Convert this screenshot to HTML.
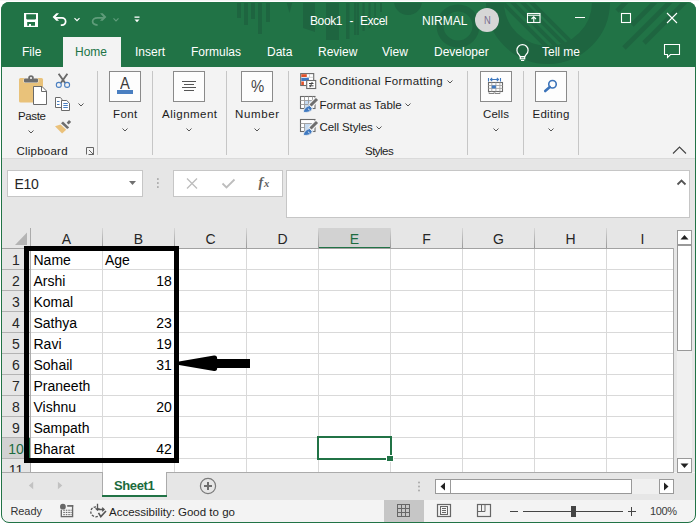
<!DOCTYPE html>
<html><head><meta charset="utf-8">
<style>
*{margin:0;padding:0;box-sizing:border-box}
html,body{width:699px;height:528px;overflow:hidden;background:#fff;font-family:"Liberation Sans",sans-serif;}
.a{position:absolute}
#win{position:absolute;left:0;top:0;width:699px;height:528px;clip-path:inset(2px 3px 5px 1px round 8px);background:#f3f3f3}
#bord{position:absolute;left:1px;top:2px;width:695px;height:521px;border:1px solid #217346;border-radius:8px;z-index:50}
.t{position:absolute;white-space:nowrap;line-height:1}
.w{color:#fff}
.tab{font-size:12px;color:#fff}
.rl{font-size:11.5px;color:#1c1c1c;letter-spacing:-0.1px}
.sep{position:absolute;width:1px;background:#c6c6c6}
.box{position:absolute;border:1px solid #8a8a8a;background:#fdfdfd}
.cell{position:absolute;font-size:14px;color:#000;line-height:1;white-space:nowrap}
.hdr{position:absolute;font-size:14px;color:#262626;line-height:1;white-space:nowrap}
</style></head><body>
<div id="win">

<div class="a" style="left:0;top:0;width:699px;height:67px;background:#217346"></div>
<svg class="a" style="left:0;top:0" width="699" height="67">
 <defs><clipPath id="bc"><circle cx="548" cy="2" r="44"/></clipPath></defs>
 <g fill="#1e6540">
  <rect x="237" y="0" width="4" height="18"/>
  <rect x="244" y="0" width="4" height="25"/>
  <rect x="251" y="0" width="4" height="19"/>
  <rect x="258" y="0" width="4" height="34"/>
  <rect x="266" y="0" width="4" height="22"/>
  <path d="M286 0h7l-3.5 13z"/>
  <path d="M303 0h12v32l-12-4z"/>
  <rect x="326" y="0" width="13" height="40"/>
  <rect x="346" y="0" width="3.5" height="39"/>
  <rect x="354" y="0" width="2.5" height="35"/>
  <rect x="357" y="0" width="2" height="35"/>
  <rect x="362.5" y="0" width="2.2" height="31"/>
  <rect x="368.5" y="0" width="2" height="28"/>
  <rect x="374.3" y="0" width="1.5" height="17"/>
  <rect x="380" y="0" width="2" height="12"/>
  <circle cx="408" cy="1" r="14"/>
 </g>
 <circle cx="458" cy="26" r="18" stroke-width="7" fill="none" stroke="#1e6540"/>
 <circle cx="548" cy="2" r="53" stroke-width="18" fill="none" stroke="#1e6540"/>
 <g stroke="#1e6540" stroke-width="4" clip-path="url(#bc)">
  <line x1="490" y1="-10" x2="580" y2="80"/>
  <line x1="500" y1="-10" x2="590" y2="80"/>
  <line x1="510" y1="-10" x2="600" y2="80"/>
  <line x1="519" y1="-10" x2="609" y2="80"/>
 </g>
 <g stroke="#1e6540" stroke-width="4.7">
  <line x1="617" y1="11" x2="632" y2="-4"/>
  <line x1="632" y1="25" x2="660" y2="-3"/>
  <line x1="624" y1="48" x2="674" y2="-2"/>
  <line x1="644" y1="43" x2="692" y2="-5"/>
 </g>
</svg>
<svg class="a" style="left:0;top:0" width="160" height="36">
 <path fill-rule="evenodd" fill="#fff" d="M24 13H38V27H24Z M26.2 14.3H36V18.7L35.2 19.6H27L26.2 18.7Z M27.2 22H35V25.7H31V24.1H29V25.7H27.2Z"/>
 <path d="M52.6 17L56.3 13.2H59L55.6 17L59 20.8H56.3Z" fill="#fff"/>
 <path d="M55.5 17.9H62A3.65 3.65 0 0 1 62 25.2H60.8" fill="none" stroke="#fff" stroke-width="1.75"/>
 <path d="M74.5 18.2l2.5 2.5 2.5-2.5" fill="none" stroke="#fff" stroke-width="1.2"/>
 <path d="M106.4 17L102.7 13.2H100L103.4 17L100 20.8H102.7Z" fill="#5f9c7a"/>
 <path d="M103.5 17.9H97.5C94.5 17.9 92.6 19.6 92.6 21.6C92.6 23.4 94.2 24.8 97.6 25.1" fill="none" stroke="#5f9c7a" stroke-width="1.75"/>
 <path d="M113.5 18.3l2.5 2.5 2.5-2.5" fill="none" stroke="#5f9c7a" stroke-width="1.2"/>
 <rect x="134.5" y="16.5" width="5" height="1.3" fill="#fff"/>
 <path d="M134.5 19.5h5l-2.5 2.8z" fill="#fff"/>
</svg>
<div class="t w" style="left:310px;top:15px;font-size:12px;letter-spacing:-0.4px">Book1</div>
<div class="t w" style="left:349.5px;top:15px;font-size:12px">-</div>
<div class="t w" style="left:360px;top:15px;font-size:12px;letter-spacing:-0.45px">Excel</div>
<div class="t w" style="left:422px;top:15px;font-size:12px">NIRMAL</div>
<div class="a" style="left:475px;top:8px;width:24px;height:24px;border-radius:50%;background:#d6d6d6"></div>
<div class="t" style="left:483.5px;top:14.6px;font-size:11px;color:#7a7090;transform:scaleX(0.85);transform-origin:0 0">N</div>
<svg class="a" style="left:500px;top:0" width="199" height="36">
 <g fill="none" stroke="#fff" stroke-width="1.1">
  <rect x="27.5" y="13.5" width="12.5" height="9"/>
  <path d="M27.5 15.3h12.5"/>
  <path d="M33.75 22.5v-5.5M31.5 19l2.25-2.25 2.25 2.25"/>
  <path d="M75 17.5h10"/>
  <rect x="121.5" y="13.5" width="9" height="9"/>
  <path d="M167 13l10 10M177 13l-10 10"/>
 </g>
</svg>
<div class="a" style="left:63px;top:37px;width:58px;height:30px;background:#f3f3f3"></div>
<div class="t tab" style="left:22px;top:46px">File</div>
<div class="t tab" style="left:75px;top:46px;color:#217346">Home</div>
<div class="t tab" style="left:135px;top:46px">Insert</div>
<div class="t tab" style="left:191px;top:46px">Formulas</div>
<div class="t tab" style="left:267px;top:46px">Data</div>
<div class="t tab" style="left:318px;top:46px">Review</div>
<div class="t tab" style="left:382px;top:46px">View</div>
<div class="t tab" style="left:434px;top:46px">Developer</div>
<svg class="a" style="left:500px;top:37.5px" width="40" height="30">
 <g fill="none" stroke="#fff" stroke-width="1.2">
  <path d="M20.3 18.6 L18.6 16.2 A5.6 5.6 0 1 1 26.4 16.2 L24.7 18.6 Z"/>
  <rect x="20.3" y="18.6" width="4.4" height="2.2"/>
 </g>
 <path d="M21 22.5h3.2" stroke="#fff" stroke-width="1.2"/>
</svg>
<div class="t tab" style="left:542px;top:46px">Tell me</div>
<svg class="a" style="left:660px;top:40px" width="24" height="22">
 <path d="M4.5 4.5h15v10h-9l-3 3v-3h-3z" fill="none" stroke="#fff" stroke-width="1.1"/>
</svg>


<div class="a" style="left:0;top:158px;width:699px;height:1px;background:#dadada"></div>
<div class="a" style="left:0;top:159px;width:699px;height:313px;background:#e6e6e6"></div>
<!-- clipboard -->
<svg class="a" style="left:0;top:66px" width="98" height="92">
 <rect x="19" y="12" width="24" height="24.5" rx="1.5" fill="#e9c27a"/>
 <rect x="23.6" y="12.2" width="14.8" height="4.6" rx="1.2" fill="#f6f6f6"/>
 <circle cx="31" cy="12" r="3.3" fill="#f6f6f6"/>
 <rect x="24" y="12.6" width="14" height="3.8" rx="1" fill="#6e6e6e"/>
 <circle cx="31" cy="12" r="2.8" fill="#6e6e6e"/>
 <circle cx="31" cy="12" r="1" fill="#fff"/>
 <path d="M33.5 20.5h8.5l4.5 4.5v13.5h-13z" fill="#fff" stroke="#6a6a6a" stroke-width="1"/>
 <path d="M41.5 20.5v5h5" fill="none" stroke="#6a6a6a" stroke-width="1"/>
 <!-- scissors -->
 <path d="M58.6 7.8l6.6 9.2M67.4 7.8l-6.6 9.2" stroke="#6a6a6a" stroke-width="1.9" fill="none"/>
 <circle cx="58.8" cy="18.9" r="2.5" fill="none" stroke="#4a7fc1" stroke-width="1.1"/>
 <circle cx="67.1" cy="18.9" r="2.5" fill="none" stroke="#4a7fc1" stroke-width="1.1"/>
 <!-- copy -->
 <path d="M55.5 31.5h4.7l1.8 1.8v8.2h-6.5z" fill="#fff" stroke="#6a6a6a" stroke-width="1"/>
 <path d="M61.5 34.5h5.2l2.8 2.8v7.2h-8z" fill="#fff" stroke="#6a6a6a" stroke-width="1"/>
 <path d="M57 35.5h2.5M57 38.5h2.5M63.3 37.5h4.5M63.3 39.5h4.5M63.3 41.5h4.5" stroke="#4a7fc1" stroke-width="1"/>
 <path d="M78.5 37.5l2.5 2.5 2.5-2.5" fill="none" stroke="#555" stroke-width="1"/>
 <!-- format painter -->
 <path d="M55 60.3L60.5 58.6L66.2 63.8L62.1 67.6Z" fill="#eac17a"/>
 <path d="M61 57.2L63 55.6L69.2 61.4L67.2 63Z" fill="#6e6e6e"/>
 <path d="M66.7 56.7L69 54L71.2 56L68.5 58.6Z" fill="#6e6e6e"/>
 <path d="M28.5 64.5l2.5 2.5 2.5-2.5" fill="none" stroke="#555" stroke-width="1"/>
 <path d="M86.5 88.5v-7h7v7h-5" fill="none" stroke="#666" stroke-width="1"/>
 <path d="M89 84l4 4M90 88.5h3.5v-3.5" fill="none" stroke="#666" stroke-width="1"/>
</svg>
<div class="t rl" style="left:18px;top:110.5px;letter-spacing:-0.35px">Paste</div>
<div class="t rl" style="left:16.5px;top:146px;letter-spacing:0.23px">Clipboard</div>
<div class="sep" style="left:97px;top:71px;height:84px"></div>
<!-- font -->
<div class="box" style="left:109px;top:71px;width:32px;height:31px"></div>
<div class="t" style="left:120.3px;top:76px;font-size:16px;color:#3a3a3a;transform:scaleX(0.92);transform-origin:0 0">A</div>
<div class="a" style="left:117px;top:90px;width:16px;height:4px;background:#4a7fc1"></div>
<div class="t rl" style="left:113px;top:109px;letter-spacing:0.4px">Font</div>
<svg class="a" style="left:100px;top:120px" width="60" height="20"><path d="M22.5 8.5l2.5 2.5 2.5-2.5" fill="none" stroke="#555" stroke-width="1"/></svg>
<div class="sep" style="left:152px;top:71px;height:84px"></div>
<!-- alignment -->
<div class="box" style="left:173px;top:71px;width:32px;height:31px"></div>
<svg class="a" style="left:173px;top:71px" width="32" height="31"><path d="M9 10.5h14M11 13.5h10M9 16.5h14M11 19.5h10" stroke="#555" stroke-width="1"/></svg>
<div class="t rl" style="left:162px;top:109px;letter-spacing:0.49px">Alignment</div>
<svg class="a" style="left:164px;top:120px" width="60" height="20"><path d="M22.5 8.5l2.5 2.5 2.5-2.5" fill="none" stroke="#555" stroke-width="1"/></svg>
<div class="sep" style="left:226px;top:71px;height:84px"></div>
<!-- number -->
<div class="box" style="left:241px;top:71px;width:32px;height:31px"></div>
<div class="t" style="left:251px;top:77.5px;font-size:16.5px;color:#444;transform:scaleX(0.9);transform-origin:0 0">%</div>
<div class="t rl" style="left:235px;top:109px;letter-spacing:0.66px">Number</div>
<svg class="a" style="left:232px;top:120px" width="60" height="20"><path d="M22.5 8.5l2.5 2.5 2.5-2.5" fill="none" stroke="#555" stroke-width="1"/></svg>
<div class="sep" style="left:288px;top:71px;height:84px"></div>
<!-- styles -->
<svg class="a" style="left:296px;top:70px" width="24" height="70">
 <rect x="4.7" y="3.6" width="13" height="11.9" fill="#fff" stroke="#6a6a6a" stroke-width="1.1"/>
 <rect x="5.3" y="4.2" width="5.5" height="2.8" fill="#e0522b"/>
 <path d="M13.5 4.2v3.2M10.8 7.3h6.4" stroke="#c8c8c8" stroke-width="0.8"/>
 <rect x="5.3" y="7.8" width="7.6" height="3.2" fill="#3f79c0"/>
 <rect x="5.3" y="11.5" width="2.6" height="3.5" fill="#e0522b"/>
 <rect x="10.3" y="10.2" width="10" height="9" fill="#f6f6f6"/>
 <rect x="10.7" y="10.5" width="9" height="8" fill="#fff" stroke="#6a6a6a" stroke-width="1.1"/>
 <path d="M13 13.5h4.5M13 15.8h4.5M16.2 12l-2.2 5.3" stroke="#444" stroke-width="1"/>
 <!-- format as table -->
 <rect x="4.5" y="26.5" width="14.5" height="12" fill="#fff" stroke="#6a6a6a" stroke-width="1.1"/>
 <rect x="8.7" y="30.7" width="8" height="8" fill="#c5daf0"/>
 <path d="M8.5 26.5v12M12.5 26.5v12M16.5 26.5v5M4.5 30.5h14.5M4.5 34.5h12" stroke="#9a9a9a" stroke-width="0.9"/>
 <path d="M21.2 28.8L14 36" stroke="#f3f3f3" stroke-width="5.2"/>
 <path d="M21 29L14.5 35.5" stroke="#6e6e6e" stroke-width="3"/>
 <path d="M7.2 42.3C7.6 38.8 10.2 36.2 13.6 35.6L16.2 38.2C15.6 41.6 12.3 42.8 7.2 42.3Z" fill="#3f79c0" stroke="#f3f3f3" stroke-width="0.9"/>
 <path d="M12.4 38.6a1.6 1.6 0 0 0 1.4 1.6" stroke="#fff" stroke-width="0.8" fill="none"/>
 <!-- cell styles -->
 <rect x="4.5" y="49.5" width="14.5" height="12" fill="#fff" stroke="#6a6a6a" stroke-width="1.1"/>
 <rect x="8.7" y="53.7" width="8.5" height="8" fill="#c5daf0"/>
 <path d="M4.5 53.5h14.5M8.5 53.5v8M4.5 57.5h4" stroke="#9a9a9a" stroke-width="0.9"/>
 <path d="M21.2 51.8L14 59" stroke="#f3f3f3" stroke-width="5.2"/>
 <path d="M21 52L14.5 58.5" stroke="#6e6e6e" stroke-width="3"/>
 <path d="M7.2 65.3C7.6 61.8 10.2 59.2 13.6 58.6L16.2 61.2C15.6 64.6 12.3 65.8 7.2 65.3Z" fill="#3f79c0" stroke="#f3f3f3" stroke-width="0.9"/>
 <path d="M12.4 61.6a1.6 1.6 0 0 0 1.4 1.6" stroke="#fff" stroke-width="0.8" fill="none"/>
</svg>
<div class="t rl" style="left:319.5px;top:76px;letter-spacing:0.35px">Conditional Formatting</div>
<div class="t rl" style="left:319.5px;top:99.5px;letter-spacing:0px">Format as Table</div>
<div class="t rl" style="left:319.5px;top:122px;letter-spacing:-0.1px">Cell Styles</div>
<svg class="a" style="left:300px;top:70px" width="170" height="70">
 <path d="M147.5 10.5l2.5 2.5 2.5-2.5M105.5 33.5l2.5 2.5 2.5-2.5M76.5 56.5l2.5 2.5 2.5-2.5" fill="none" stroke="#555" stroke-width="1"/>
</svg>
<div class="t rl" style="left:365px;top:146px;letter-spacing:-0.52px">Styles</div>
<div class="sep" style="left:467px;top:71px;height:84px"></div>
<!-- cells -->
<div class="box" style="left:480px;top:71px;width:32px;height:31px"></div>
<svg class="a" style="left:480px;top:71px" width="32" height="31">
 <path d="M8.5 7v3.5M20.5 7v3.5M10.5 8.5h8.5" stroke="#3f79c0" stroke-width="1.1" fill="none"/>
 <path d="M12.2 6.9l-1.7 1.6 1.7 1.6M16.8 6.9l1.7 1.6-1.7 1.6" stroke="#3f79c0" stroke-width="1.1" fill="none"/>
 <rect x="8.5" y="11.5" width="14" height="9" fill="#fff" stroke="#6a6a6a" stroke-width="1.1"/>
 <path d="M11.8 11.5v9M15.9 11.5v9M19.9 11.5v9M8.5 14.5h14M8.5 17.4h14" stroke="#a5a5a5" stroke-width="0.9"/>
 <rect x="11.8" y="14.5" width="4.1" height="2.9" fill="#3f79c0"/>
 <path d="M9 21.3v1.2h5v-1.2M15 21.3v1.2h5v-1.2" stroke="#777" stroke-width="0.9" fill="none"/>
</svg>
<div class="t rl" style="left:483px;top:109px;letter-spacing:0.08px">Cells</div>
<svg class="a" style="left:471px;top:120px" width="60" height="20"><path d="M22.5 8.5l2.5 2.5 2.5-2.5" fill="none" stroke="#555" stroke-width="1"/></svg>
<div class="sep" style="left:523px;top:71px;height:84px"></div>
<!-- editing -->
<div class="box" style="left:535px;top:71px;width:32px;height:31px"></div>
<svg class="a" style="left:535px;top:71px" width="32" height="31">
 <circle cx="17.5" cy="13.2" r="3.75" fill="none" stroke="#3b73b9" stroke-width="1.6"/>
 <path d="M14.8 16l-4.6 4" stroke="#3b73b9" stroke-width="2.6" stroke-linecap="round"/>
</svg>
<div class="t rl" style="left:532.5px;top:109px;letter-spacing:0.27px">Editing</div>
<svg class="a" style="left:526px;top:120px" width="60" height="20"><path d="M22.5 8.5l2.5 2.5 2.5-2.5" fill="none" stroke="#555" stroke-width="1"/></svg>
<div class="sep" style="left:578px;top:71px;height:84px"></div>
<svg class="a" style="left:668px;top:142px" width="24" height="16"><path d="M5 11.5l6.5-6.5 6.5 6.5" fill="none" stroke="#444" stroke-width="1.1"/></svg>

<!-- formula bar -->
<div class="a" style="left:7px;top:170px;width:136px;height:27px;background:#fff;border:1px solid #c6c6c6"></div>
<div class="t" style="left:14.5px;top:177px;font-size:14px;color:#262626;letter-spacing:-0.3px">E10</div>
<svg class="a" style="left:120px;top:170px" width="50" height="27">
 <path d="M9 11h7l-3.5 4z" fill="#707070"/>
 <rect x="37" y="8.2" width="1.7" height="1.7" fill="#a8a8a8"/><rect x="37" y="12.2" width="1.7" height="1.7" fill="#a8a8a8"/><rect x="37" y="16.2" width="1.7" height="1.7" fill="#a8a8a8"/>
</svg>
<div class="a" style="left:173px;top:170px;width:110px;height:27px;background:#fff;border:1px solid #c6c6c6"></div>
<svg class="a" style="left:173px;top:170px" width="110" height="27">
 <path d="M14 8.5l10 10M24 8.5l-10 10" stroke="#bdbdbd" stroke-width="1.3"/>
 <path d="M49.5 13.5l4 4 8-8" fill="none" stroke="#bdbdbd" stroke-width="1.8"/>
</svg>
<div class="t" style="left:258.5px;top:176px;font-size:14px;color:#606060;font-family:'Liberation Serif',serif;font-style:italic;font-weight:bold">f<span style="font-size:10.5px;margin-left:0.8px">x</span></div>
<div class="a" style="left:286px;top:170px;width:404px;height:48px;background:#fff;border:1px solid #c6c6c6"></div>
<svg class="a" style="left:674px;top:176px" width="16" height="14"><path d="M3.5 8.5l4-4 4 4" fill="none" stroke="#555" stroke-width="1.8"/></svg>

<div class="a" style="left:30px;top:248px;width:644px;height:224px;background:#fff"></div>
<div class="a" style="left:318px;top:228px;width:73px;height:20px;background:#d2d2d2"></div>
<div class="a" style="left:318px;top:247px;width:73px;height:2px;background:#217346"></div>
<div class="a" style="left:2px;top:437px;width:28px;height:22px;background:#d2d2d2"></div>
<div class="a" style="left:29px;top:437px;width:2px;height:22px;background:#217346"></div>
<div class="a" style="left:102px;top:248px;width:1px;height:224px;background:#d9d9d9"></div>
<div class="a" style="left:174px;top:248px;width:1px;height:224px;background:#d9d9d9"></div>
<div class="a" style="left:246px;top:248px;width:1px;height:224px;background:#d9d9d9"></div>
<div class="a" style="left:318px;top:248px;width:1px;height:224px;background:#d9d9d9"></div>
<div class="a" style="left:390px;top:248px;width:1px;height:224px;background:#d9d9d9"></div>
<div class="a" style="left:462px;top:248px;width:1px;height:224px;background:#d9d9d9"></div>
<div class="a" style="left:534px;top:248px;width:1px;height:224px;background:#d9d9d9"></div>
<div class="a" style="left:606px;top:248px;width:1px;height:224px;background:#d9d9d9"></div>
<div class="a" style="left:30px;top:269px;width:644px;height:1px;background:#d9d9d9"></div>
<div class="a" style="left:30px;top:290px;width:644px;height:1px;background:#d9d9d9"></div>
<div class="a" style="left:30px;top:311px;width:644px;height:1px;background:#d9d9d9"></div>
<div class="a" style="left:30px;top:332px;width:644px;height:1px;background:#d9d9d9"></div>
<div class="a" style="left:30px;top:353px;width:644px;height:1px;background:#d9d9d9"></div>
<div class="a" style="left:30px;top:374px;width:644px;height:1px;background:#d9d9d9"></div>
<div class="a" style="left:30px;top:395px;width:644px;height:1px;background:#d9d9d9"></div>
<div class="a" style="left:30px;top:416px;width:644px;height:1px;background:#d9d9d9"></div>
<div class="a" style="left:30px;top:437px;width:644px;height:1px;background:#d9d9d9"></div>
<div class="a" style="left:30px;top:458px;width:644px;height:1px;background:#d9d9d9"></div>
<div class="a" style="left:30px;top:479px;width:644px;height:1px;background:#d9d9d9"></div>
<div class="a" style="left:102px;top:228px;width:1px;height:20px;background:linear-gradient(#d8d8d8,#bdbdbd 40%,#9a9a9a)"></div>
<div class="a" style="left:174px;top:228px;width:1px;height:20px;background:linear-gradient(#d8d8d8,#bdbdbd 40%,#9a9a9a)"></div>
<div class="a" style="left:246px;top:228px;width:1px;height:20px;background:linear-gradient(#d8d8d8,#bdbdbd 40%,#9a9a9a)"></div>
<div class="a" style="left:318px;top:228px;width:1px;height:20px;background:linear-gradient(#d8d8d8,#bdbdbd 40%,#9a9a9a)"></div>
<div class="a" style="left:390px;top:228px;width:1px;height:20px;background:linear-gradient(#d8d8d8,#bdbdbd 40%,#9a9a9a)"></div>
<div class="a" style="left:462px;top:228px;width:1px;height:20px;background:linear-gradient(#d8d8d8,#bdbdbd 40%,#9a9a9a)"></div>
<div class="a" style="left:534px;top:228px;width:1px;height:20px;background:linear-gradient(#d8d8d8,#bdbdbd 40%,#9a9a9a)"></div>
<div class="a" style="left:606px;top:228px;width:1px;height:20px;background:linear-gradient(#d8d8d8,#bdbdbd 40%,#9a9a9a)"></div>
<div class="a" style="left:2px;top:269px;width:28px;height:1px;background:#b3b3b3"></div>
<div class="a" style="left:2px;top:290px;width:28px;height:1px;background:#b3b3b3"></div>
<div class="a" style="left:2px;top:311px;width:28px;height:1px;background:#b3b3b3"></div>
<div class="a" style="left:2px;top:332px;width:28px;height:1px;background:#b3b3b3"></div>
<div class="a" style="left:2px;top:353px;width:28px;height:1px;background:#b3b3b3"></div>
<div class="a" style="left:2px;top:374px;width:28px;height:1px;background:#b3b3b3"></div>
<div class="a" style="left:2px;top:395px;width:28px;height:1px;background:#b3b3b3"></div>
<div class="a" style="left:2px;top:416px;width:28px;height:1px;background:#b3b3b3"></div>
<div class="a" style="left:2px;top:437px;width:28px;height:1px;background:#b3b3b3"></div>
<div class="a" style="left:2px;top:458px;width:28px;height:1px;background:#b3b3b3"></div>
<div class="a" style="left:2px;top:479px;width:28px;height:1px;background:#b3b3b3"></div>
<div class="a" style="left:2px;top:248px;width:672px;height:1px;background:#a2a2a2"></div>
<div class="a" style="left:30px;top:228px;width:1px;height:244px;background:#ababab"></div>
<div class="a" style="left:673px;top:248px;width:1px;height:224px;background:#ababab"></div>
<div class="a" style="left:2px;top:472px;width:672px;height:1px;background:#ababab"></div>
<svg class="a" style="left:0;top:228px" width="30" height="20"><path d="M15 17h12v-12.5z" fill="#b4b4b4"/></svg>
<div class="hdr" style="left:66.5px;top:232px;width:0;"><span style="position:absolute;transform:translateX(-50%);color:#262626">A</span></div>
<div class="hdr" style="left:138.5px;top:232px;width:0;"><span style="position:absolute;transform:translateX(-50%);color:#262626">B</span></div>
<div class="hdr" style="left:210.5px;top:232px;width:0;"><span style="position:absolute;transform:translateX(-50%);color:#262626">C</span></div>
<div class="hdr" style="left:282.5px;top:232px;width:0;"><span style="position:absolute;transform:translateX(-50%);color:#262626">D</span></div>
<div class="hdr" style="left:354.5px;top:232px;width:0;"><span style="position:absolute;transform:translateX(-50%);color:#1d6b3f">E</span></div>
<div class="hdr" style="left:426.5px;top:232px;width:0;"><span style="position:absolute;transform:translateX(-50%);color:#262626">F</span></div>
<div class="hdr" style="left:498.5px;top:232px;width:0;"><span style="position:absolute;transform:translateX(-50%);color:#262626">G</span></div>
<div class="hdr" style="left:570.5px;top:232px;width:0;"><span style="position:absolute;transform:translateX(-50%);color:#262626">H</span></div>
<div class="hdr" style="left:642.5px;top:232px;width:0;"><span style="position:absolute;transform:translateX(-50%);color:#262626">I</span></div>
<div class="hdr" style="left:2px;top:253px;width:28px;text-align:center;color:#262626">1</div>
<div class="hdr" style="left:2px;top:274px;width:28px;text-align:center;color:#262626">2</div>
<div class="hdr" style="left:2px;top:295px;width:28px;text-align:center;color:#262626">3</div>
<div class="hdr" style="left:2px;top:316px;width:28px;text-align:center;color:#262626">4</div>
<div class="hdr" style="left:2px;top:337px;width:28px;text-align:center;color:#262626">5</div>
<div class="hdr" style="left:2px;top:358px;width:28px;text-align:center;color:#262626">6</div>
<div class="hdr" style="left:2px;top:379px;width:28px;text-align:center;color:#262626">7</div>
<div class="hdr" style="left:2px;top:400px;width:28px;text-align:center;color:#262626">8</div>
<div class="hdr" style="left:2px;top:421px;width:28px;text-align:center;color:#262626">9</div>
<div class="hdr" style="left:2px;top:442px;width:28px;text-align:center;color:#1d6b3f">10</div>
<div class="hdr" style="left:2px;top:463px;width:28px;text-align:center;color:#262626">11</div>
<div class="cell" style="left:33.5px;top:253px">Name</div>
<div class="cell" style="left:105px;top:253px">Age</div>
<div class="cell" style="left:33.5px;top:274px">Arshi</div>
<div class="cell" style="left:102px;top:274px;width:69.8px;text-align:right">18</div>
<div class="cell" style="left:33.5px;top:295px">Komal</div>
<div class="cell" style="left:33.5px;top:316px">Sathya</div>
<div class="cell" style="left:102px;top:316px;width:69.8px;text-align:right">23</div>
<div class="cell" style="left:33.5px;top:337px">Ravi</div>
<div class="cell" style="left:102px;top:337px;width:69.8px;text-align:right">19</div>
<div class="cell" style="left:33.5px;top:358px">Sohail</div>
<div class="cell" style="left:102px;top:358px;width:69.8px;text-align:right">31</div>
<div class="cell" style="left:33.5px;top:379px">Praneeth</div>
<div class="cell" style="left:33.5px;top:400px">Vishnu</div>
<div class="cell" style="left:102px;top:400px;width:69.8px;text-align:right">20</div>
<div class="cell" style="left:33.5px;top:421px">Sampath</div>
<div class="cell" style="left:33.5px;top:442px">Bharat</div>
<div class="cell" style="left:102px;top:442px;width:69.8px;text-align:right">42</div>
<div class="a" style="left:2px;top:472px;width:672px;height:1px;background:#ababab"></div>
<div class="a" style="left:317px;top:436px;width:75px;height:24px;border:2px solid #217346"></div>
<div class="a" style="left:386px;top:455px;width:8px;height:7px;background:#fff"></div>
<div class="a" style="left:387px;top:456px;width:6px;height:5px;background:#217346"></div>
<div class="a" style="left:24px;top:246px;width:155px;height:217px;border:5px solid #000"></div>
<svg class="a" style="left:170px;top:345px" width="90" height="35"><path d="M9 16.6 L44 10.6 Q47.2 10.3 47.2 14 L80 14 L80 23 L47.2 23 Q47.2 26.3 44 25.9 L9 20 Z" fill="#000"/></svg>
<div class="a" style="left:674px;top:228px;width:21px;height:244px;background:#e6e6e6"></div>
<div class="a" style="left:677px;top:245px;width:15px;height:213px;background:#f0f0f0"></div>
<div class="a" style="left:677px;top:230px;width:15px;height:15px;background:#fff;border:1px solid #999"></div>
<div class="a" style="left:677px;top:245px;width:15px;height:106px;background:#fff;border:1px solid #999"></div>
<div class="a" style="left:677px;top:458px;width:15px;height:15px;background:#fff;border:1px solid #999"></div>
<svg class="a" style="left:677px;top:230px" width="15" height="243"><path d="M3.5 9.5h8l-4-4.5z" fill="#222"/><path d="M3.5 233.5h8l-4 4.5z" fill="#222"/></svg>
<div class="a" style="left:0;top:473px;width:699px;height:27px;background:#e6e6e6"></div>
<div class="a" style="left:102px;top:472px;width:65px;height:25px;background:#fff;border-left:1px solid #ababab;border-right:1px solid #ababab"></div>
<div class="a" style="left:102px;top:495px;width:65px;height:2px;background:#217346"></div>
<div class="t" style="left:114px;top:479px;font-size:13px;font-weight:bold;color:#1b6a3c;letter-spacing:-0.4px">Sheet1</div>
<svg class="a" style="left:20px;top:476px" width="50" height="20"><path d="M13.2 5.7v7.6l-4.4-3.8z" fill="#c2c2c2"/><path d="M37.9 5.7v7.6l4.4-3.8z" fill="#c2c2c2"/></svg>
<svg class="a" style="left:198px;top:476px" width="20" height="20"><circle cx="10" cy="10" r="7.6" fill="none" stroke="#7a7a7a" stroke-width="1.2"/><path d="M10 6v8M6 10h8" stroke="#6e6e6e" stroke-width="2"/></svg>
<svg class="a" style="left:414px;top:480px" width="10" height="16"><circle cx="5" cy="2.5" r="1" fill="#aaa"/><circle cx="5" cy="6.5" r="1" fill="#aaa"/><circle cx="5" cy="10.5" r="1" fill="#aaa"/></svg>
<div class="a" style="left:435px;top:479px;width:239px;height:15px;background:#f0f0f0"></div>
<div class="a" style="left:435px;top:479px;width:16px;height:15px;background:#fff;border:1px solid #999"></div>
<div class="a" style="left:450px;top:479px;width:182px;height:15px;background:#fff;border:1px solid #999"></div>
<div class="a" style="left:659px;top:479px;width:15px;height:15px;background:#fff;border:1px solid #999"></div>
<svg class="a" style="left:435px;top:479px" width="239" height="15"><path d="M10 3.5v8l-4.5-4z" fill="#222"/><path d="M229 3.5v8l4.5-4z" fill="#222"/></svg>
<div class="a" style="left:0;top:500px;width:699px;height:23px;background:#f3f3f3"></div>
<div class="t" style="left:10.5px;top:506px;font-size:11px;color:#333;letter-spacing:-0.1px">Ready</div>
<svg class="a" style="left:55px;top:500px" width="55" height="22"><circle cx="7.9" cy="6.7" r="2.9" fill="#666"/><path d="M12.2 5.9h6" stroke="#666" stroke-width="1.7"/><path d="M6.3 9.8v6.8h11.3v-11.5" fill="none" stroke="#666" stroke-width="1.3"/><g fill="#666"><rect x="8.3" y="9.7" width="1.5" height="1.1"/><rect x="10.8" y="9.7" width="1.5" height="1.1"/><rect x="13.3" y="9.7" width="1.5" height="1.1"/><rect x="8.3" y="11.9" width="1.5" height="1.1"/><rect x="10.8" y="11.9" width="1.5" height="1.1"/><rect x="13.3" y="11.9" width="1.5" height="1.1"/><rect x="15.6" y="11.9" width="1" height="1.1"/><rect x="8.3" y="14.1" width="1.5" height="1.1"/><rect x="10.8" y="14.1" width="1.5" height="1.1"/><rect x="13.3" y="14.1" width="1.5" height="1.1"/><rect x="15.6" y="14.1" width="1" height="1.1"/><rect x="15.6" y="9.7" width="1" height="1.1"/></g><g fill="none" stroke="#555" stroke-width="1.3"><path d="M41 6.8 A5 5 0 1 0 43 16.3" stroke-dasharray="2.4 1.4"/><path d="M42.5 3.8v6.3M40.6 8.3l1.9 1.9 1.9-1.9M43 9.5h6M47.2 7.6l1.9 1.9-1.9 1.9"/><path d="M43.5 12.8l2.3 3.8 5.2-5.6" stroke-width="1.6"/></g></svg>
<div class="t" style="left:109px;top:507px;font-size:11.5px;color:#1e1e1e">Accessibility: Good to go</div>
<div class="a" style="left:384px;top:500px;width:40px;height:22px;background:#c6c6c6"></div>
<svg class="a" style="left:384px;top:500px" width="120" height="22"><g fill="none" stroke="#666" stroke-width="1"><rect x="13.5" y="4.5" width="12" height="12"/><path d="M17.5 4.5v12M21.5 4.5v12M13.5 8.5h12M13.5 12.5h12"/><rect x="53.5" y="4.5" width="13" height="12" stroke-width="1.2"/><rect x="56.5" y="6.5" width="7" height="8"/><path d="M58 8.5h4M58 10.5h4M58 12.5h4" stroke-width="1.1"/><rect x="93.5" y="4.5" width="13" height="12" stroke-width="1.2"/><path d="M93.5 11.5h7.5v-7M97.5 4.5v7"/></g></svg>
<div class="a" style="left:510px;top:511px;width:8px;height:1px;background:#444"></div>
<div class="a" style="left:523px;top:511px;width:100px;height:1px;background:#444"></div>
<div class="a" style="left:571px;top:506px;width:5px;height:11px;background:#444"></div>
<div class="a" style="left:628px;top:511px;width:8px;height:1px;background:#444"></div>
<div class="a" style="left:631px;top:507px;width:1px;height:9px;background:#444"></div>
<div class="t" style="left:650px;top:506px;font-size:11px;color:#3a3a3a;letter-spacing:-0.4px">100%</div>
</div>
<div class="a" style="left:0;top:0;width:699px;height:1px;background:#f4f5f5"></div>
<div id="bord"></div>
</body></html>
